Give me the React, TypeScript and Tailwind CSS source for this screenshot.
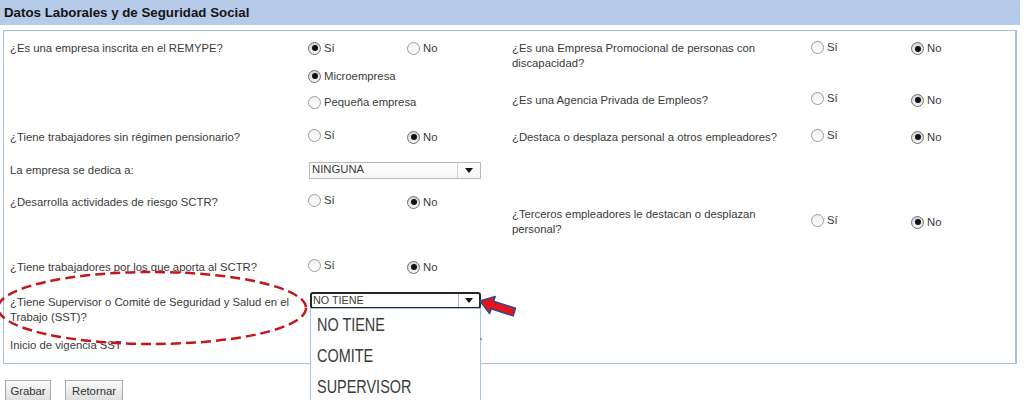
import React from "react";

// ─── small form pieces ────────────────────────────────────────────────────────
function Radio({ checked, label }: { checked?: boolean; label: string }) {
  return (
    <span className="inline-flex items-center">
      <span
        className={`flex h-[13px] w-[13px] items-center justify-center rounded-full border ${
          checked
            ? "border-[#6f6f6f] bg-linear-to-b from-[#d4d4d4] to-[#f4f4f4]"
            : "border-[#9c9c9c] bg-linear-to-b from-[#eeeeee] to-white"
        }`}
      >
        {checked && <span className="h-[6px] w-[6px] rounded-full bg-[#111]" />}
      </span>
      <span className="ml-[3px]">{label}</span>
    </span>
  );
}

function YesNo({ yes, slot }: { yes?: boolean; slot: string }) {
  return (
    <div className="flex items-center">
      <div className={slot}>
        <Radio checked={yes} label="Sí" />
      </div>
      <Radio checked={!yes} label="No" />
    </div>
  );
}

function Arrow() {
  return <span className="h-0 w-0 border-x-[4px] border-t-[5px] border-x-transparent border-t-[#111]" />;
}

// left column row: fixed label width, controls after it
function LRow({ label, cls, children }: { label: React.ReactNode; cls: string; children?: React.ReactNode }) {
  return (
    <div className={`flex ${cls}`}>
      <div className="w-[298px] shrink-0">{label}</div>
      {children}
    </div>
  );
}

export default function App() {
  return (
    <div className="relative h-[400px] w-[1024px] overflow-hidden bg-white font-['Liberation_Sans',Arial,sans-serif] text-[11.3px] text-[#3a3a3a]">
      {/* ── title bar ─────────────────────────────────────────── */}
      <div className="flex h-[25px] w-[1020px] items-center bg-[#b6cae9] pl-[4px] text-[13.3px] font-bold text-[#141414]">
        Datos Laborales y de Seguridad Social
      </div>

      {/* ── panel ─────────────────────────────────────────────── */}
      <div className="ml-[3px] mt-[5px] flex h-[334px] w-[1014px] border border-r-2 border-[#a6bfe3]">
        {/* LEFT column */}
        <div className="w-[506px] shrink-0 pl-[6px] pt-[7px]">
          <LRow label="¿Es una empresa inscrita en el REMYPE?" cls="h-[20px] items-center">
            <YesNo yes slot="w-[99px]" />
          </LRow>
          <LRow label="" cls="mt-[8px] h-[20px] items-center">
            <Radio checked label="Microempresa" />
          </LRow>
          <LRow label="" cls="mt-[6px] h-[20px] items-center">
            <Radio label="Pequeña empresa" />
          </LRow>
          <LRow label="¿Tiene trabajadores sin régimen pensionario?" cls="mt-[15px] h-[20px] items-center">
            <YesNo slot="w-[99px]" />
          </LRow>
          <LRow label="La empresa se dedica a:" cls="mt-[13px] h-[20px] items-center">
            <div className="ml-[1px] flex h-[17px] w-[172px] items-center border border-[#b8b8b8] bg-linear-to-b from-white to-[#f6f6f6]">
              <span className="flex-1 pl-[2px] leading-none">NINGUNA</span>
              <span className="flex h-full w-[23px] items-center justify-center border-l border-[#d0d0d0]">
                <Arrow />
              </span>
            </div>
          </LRow>
          <LRow label="¿Desarrolla actividades de riesgo SCTR?" cls="mt-[12px] h-[20px] items-center">
            <YesNo slot="w-[99px]" />
          </LRow>
          <LRow label="¿Tiene trabajadores por los que aporta al SCTR?" cls="mt-[45px] h-[20px] items-center">
            <YesNo slot="w-[99px]" />
          </LRow>
          <LRow
            label={
              <div className="pt-[3px] leading-[15px]">
                ¿Tiene Supervisor o Comité de Seguridad y Salud en el
                <br />
                Trabajo (SST)?
              </div>
            }
            cls="mt-[15px] h-[34px] items-start"
          >
            <div className="ml-[2px] flex h-[17px] w-[171px] items-center rounded-[3px] border-2 border-[#262626] bg-white">
              <span className="flex-1 pl-[1px] text-[10.8px] leading-none">NO TIENE</span>
              <span className="flex h-full w-[21px] items-center justify-center border-l border-[#9fb9df]">
                <Arrow />
              </span>
            </div>
          </LRow>
          <LRow label="Inicio de vigencia SST" cls="mt-[9px] h-[20px] items-center" />
        </div>

        {/* RIGHT column */}
        <div className="flex-1 pl-[2px] pt-[10px]">
          <div className="flex h-[30px] items-start leading-[15px]">
            <div className="w-[299px] shrink-0">
              ¿Es una Empresa Promocional de personas con
              <br />
              discapacidad?
            </div>
            <div className="flex h-[15px] items-center">
              <YesNo slot="w-[100px]" />
            </div>
          </div>
          <div className="mt-[19px] flex h-[20px] items-center">
            <div className="w-[299px] shrink-0">¿Es una Agencia Privada de Empleos?</div>
            <YesNo slot="w-[100px]" />
          </div>
          <div className="mt-[17px] flex h-[20px] items-center">
            <div className="w-[299px] shrink-0">¿Destaca o desplaza personal a otros empleadores?</div>
            <YesNo slot="w-[100px]" />
          </div>
          <div className="mt-[60px] flex h-[30px] items-center leading-[15px]">
            <div className="w-[299px] shrink-0">
              ¿Terceros empleadores le destacan o desplazan
              <br />
              personal?
            </div>
            <YesNo slot="w-[100px]" />
          </div>
        </div>
      </div>

      {/* ── buttons ───────────────────────────────────────────── */}
      <div className="ml-[5px] mt-[16px] flex gap-[14px]">
        <button className="flex h-[22px] w-[46px] items-center justify-center border border-[#a9a9a9] bg-linear-to-b from-[#fafafa] to-[#dedede] text-[#333]">
          Grabar
        </button>
        <button className="flex h-[22px] w-[58px] items-center justify-center border border-[#a9a9a9] bg-linear-to-b from-[#fafafa] to-[#dedede] text-[#333]">
          Retornar
        </button>
      </div>

      {/* ── open dropdown list (overlays panel) ───────────────── */}
      <div className="absolute left-[310px] top-[308px] h-[100px] w-[171px] border border-[#a9c1e2] bg-white text-[#3a3a3a]">
        {["NO TIENE", "COMITE", "SUPERVISOR"].map((t) => (
          <div key={t} className="flex h-[31px] items-center pl-[6px]">
            <span className="inline-block origin-left scale-x-[0.76] text-[19px] leading-none">{t}</span>
          </div>
        ))}
      </div>

      {/* ── annotation: dashed ellipse + red arrow ─────────────── */}
      <svg className="pointer-events-none absolute left-0 top-0" width="1024" height="400">
        <ellipse
          cx="152"
          cy="308"
          rx="154"
          ry="36"
          fill="none"
          stroke="#c4161c"
          strokeWidth="2.5"
          strokeDasharray="10 5"
        />
        <polygon
          points="480,301 495.2,296.4 493.6,301.2 515.5,308.3 513.1,315.9 491.2,308.8 489.6,313.6"
          fill="#e3141b"
          stroke="#2b4c8c"
          strokeWidth="1.5"
          strokeLinejoin="round"
        />
        <circle cx="481" cy="339" r="1" fill="#6a7fe0" />
      </svg>
    </div>
  );
}
